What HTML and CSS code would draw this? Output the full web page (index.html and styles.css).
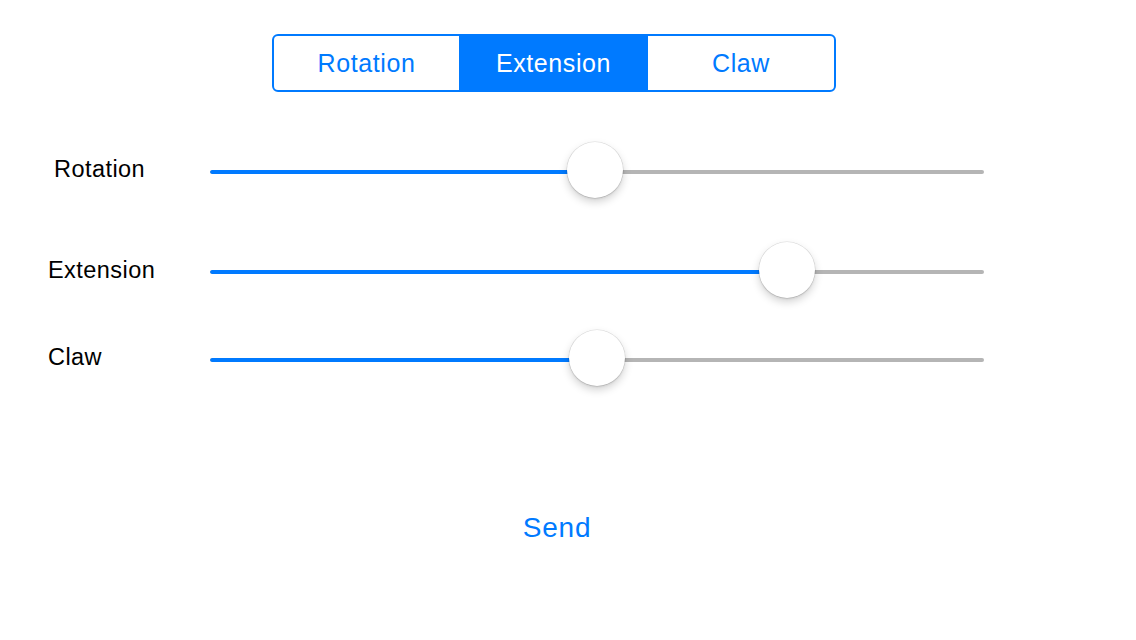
FILE: index.html
```html
<!DOCTYPE html>
<html>
<head>
<meta charset="utf-8">
<link rel="stylesheet" href="styles.css">
</head>
<body>
<div class="page">
  <div class="segmented">
    <div class="segment segment--left">Rotation</div>
    <div class="segment segment--middle segment--active">Extension</div>
    <div class="segment segment--right">Claw</div>
  </div>

  <div class="controls">
    <div class="row row--first">
      <div class="label label--rotation">Rotation</div>
      <div class="slider">
        <div class="track"><div class="fill" style="width:385px"></div></div>
        <div class="thumb" style="left:357px"></div>
      </div>
    </div>
    <div class="row row--second">
      <div class="label">Extension</div>
      <div class="slider">
        <div class="track"><div class="fill" style="width:577px"></div></div>
        <div class="thumb" style="left:549px"></div>
      </div>
    </div>
    <div class="row row--third">
      <div class="label label--claw">Claw</div>
      <div class="slider">
        <div class="track"><div class="fill" style="width:387px"></div></div>
        <div class="thumb" style="left:359px"></div>
      </div>
    </div>
  </div>

  <div class="send-wrap"><span class="send">Send</span></div>
</div>
</body>
</html>
```

FILE: styles.css
```css
html, body {
  margin: 0;
  padding: 0;
  background: #ffffff;
}

body {
  font-family: "Liberation Sans", Arial, Helvetica, sans-serif;
  color: #000000;
}

.page {
  width: 1136px;
  height: 640px;
  padding-top: 34px;
  box-sizing: border-box;
}

.segmented {
  margin-left: 272px;
  width: 564px;
  height: 58px;
  box-sizing: border-box;
  border: 2px solid #007aff;
  border-radius: 6px;
  display: flex;
  overflow: hidden;
}

.segment {
  display: flex;
  align-items: center;
  justify-content: center;
  font-size: 25px;
  letter-spacing: 0.6px;
  color: #007aff;
  padding-top: 1px;
}

.segment--left { width: 185px; }
.segment--middle { width: 189px; }
.segment--right { width: 186px; }

.segment--active {
  background: #007aff;
  color: #ffffff;
}

.controls {
  display: flex;
  flex-direction: column;
}

.row {
  display: flex;
  align-items: center;
  height: 56px;
}

.row--first { margin-top: 50px; }
.row--second { margin-top: 44px; }
.row--third { margin-top: 32px; }

.label {
  width: 162px;
  padding-left: 48px;
  font-size: 23.5px;
  letter-spacing: 0.45px;
}

.label--rotation {
  width: 156px;
  padding-left: 54px;
  margin-top: -1px;
}

.label--claw {
  margin-top: -2px;
}

.slider {
  position: relative;
  width: 774px;
  height: 56px;
  display: flex;
  align-items: center;
}

.track {
  width: 100%;
  height: 4px;
  border-radius: 2px;
  background: #b5b5b5;
  margin-top: 3px;
  overflow: hidden;
  display: flex;
}

.fill {
  height: 100%;
  background: #007aff;
  border-radius: 2px 0 0 2px;
}

.thumb {
  position: absolute;
  top: 0;
  width: 56px;
  height: 56px;
  border-radius: 50%;
  background: #ffffff;
  box-shadow: 0 0 0 0.5px rgba(0, 0, 0, 0.12), 0 4px 8px rgba(0, 0, 0, 0.18), 0 1px 2px rgba(0, 0, 0, 0.1);
}

.send-wrap {
  width: 1114px;
  text-align: center;
  margin-top: 128px;
  line-height: 28px;
}

.send {
  font-size: 28px;
  letter-spacing: 0.8px;
  color: #007aff;
}
```
